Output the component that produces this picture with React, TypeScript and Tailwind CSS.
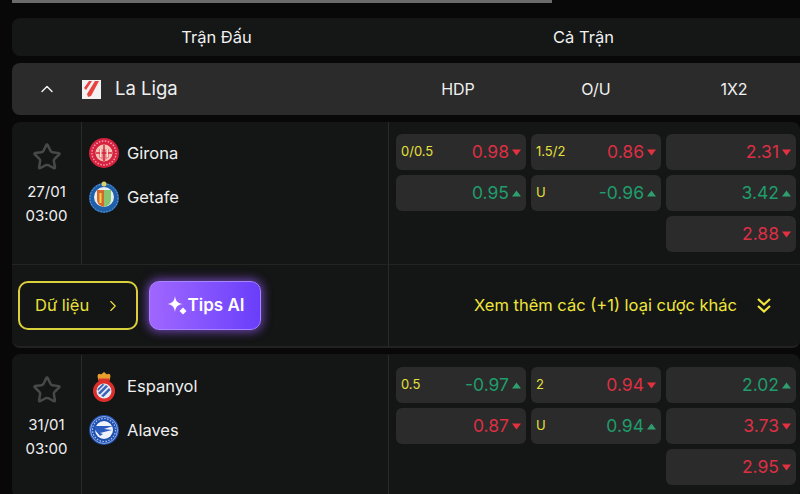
import { ChevronRight, ChevronUp, Star } from "lucide-react";

const font = { fontFamily: "Inter, 'Liberation Sans', sans-serif" };

const Triangle = ({ up }: { up: boolean }) => (
  <svg width="9" height="7" viewBox="0 0 9 7" className={up ? "fill-[#2f9e6e]" : "fill-[#e5303f]"}>
    {up ? <path d="M4.5 0.5 L9 6.5 H0 Z" /> : <path d="M0 0.5 H9 L4.5 6.5 Z" />}
  </svg>
);

const OddCell = ({ label, value, up }: { label?: string; value: string; up: boolean }) => (
  <div className="flex h-[36px] items-center justify-between rounded-md bg-[#2b2b2b] px-[5px]">
    <span className="text-[13px] text-[#e8e03c]">{label}</span>
    <span className="flex items-center gap-[3px]">
      <span className={`text-[17.5px] ${up ? "text-[#1f9d6b]" : "text-[#dc2f44]"}`}>{value}</span>
      <Triangle up={up} />
    </span>
  </div>
);

const Girona = () => (
  <svg width="30" height="30" viewBox="0 0 30 30">
    <circle cx="15" cy="15" r="15" fill="#d8213f" />
    <circle cx="15" cy="15" r="12" fill="none" stroke="#eea3ad" strokeWidth="1.4" strokeDasharray="1.5 1.5" />
    <circle cx="15" cy="15" r="8.5" fill="#f0c4b6" />
    <path d="M10 11h10v8l-5 4-5-4z" fill="#e8818a" />
    <path d="M15 7v16M7 15h16" stroke="#d8213f" strokeWidth="1.4" />
    <path d="M11 11h1.5v8H11zM17.5 11H19v8h-1.5z" fill="#f9e3c9" />
  </svg>
);

const Getafe = () => (
  <svg width="30" height="32" viewBox="0 0 30 32">
    <circle cx="15" cy="17" r="15" fill="#1f5fa8" />
    <circle cx="15" cy="17" r="14" fill="none" stroke="#9dbde0" strokeWidth="0.7" strokeDasharray="1.5 1.5" />
    <circle cx="15" cy="16" r="10" fill="#e6eef5" />
    <path d="M8 9h7v17c-4-1-7-3-7-8z" fill="#d9662b" />
    <path d="M15 9h7v9c0 5-3 7-7 8z" fill="#86c46f" />
    <rect x="10.5" y="12" width="2" height="10" fill="#f2d14a" />
    <circle cx="15" cy="3" r="2.5" fill="#d8d06a" />
  </svg>
);

const Espanyol = () => (
  <svg width="24" height="31" viewBox="0 0 24 31">
    <path d="M6 3.5a2 2 0 0 1 3 0L12 1l3 2.5a2 2 0 0 1 3 0c1 1.500 0 4-.5 6h-11C6 7.500 5 5 6 3.500z" fill="#e8a02c" />
    <rect x="6.500" y="7.500" width="11" height="2.500" fill="#d8322c" />
    <circle cx="12" cy="20" r="11" fill="#dc2f2c" />
    <circle cx="12" cy="20" r="7.500" fill="#e6ecf5" />
    <path d="M6 22l8-8 2 1.500-8 8zM9 25l8-8 1.500 2-7 7z" fill="#3a62b5" />
    <path d="M5.500 18l5-5 2 .5-6.500 6.500z" fill="#3a62b5" />
  </svg>
);

const Alaves = () => (
  <svg width="30" height="30" viewBox="0 0 30 30">
    <circle cx="15" cy="15" r="15" fill="#1f4fb0" />
    <circle cx="15" cy="15" r="13.500" fill="none" stroke="#a9c2ee" strokeWidth="0.8" />
    <circle cx="15" cy="15" r="11.500" fill="none" stroke="#a9c2ee" strokeWidth="1.200" strokeDasharray="1.500 1.500" />
    <circle cx="15" cy="15" r="9" fill="#eef3fb" />
    <path d="M6 11h18l-9 3 8 1-12 3 3 1-3 2-5-6z" fill="#2a5cc0" />
  </svg>
);

const LaLiga = () => (
  <svg width="19" height="19" viewBox="0 0 19 19">
    <rect width="19" height="19" fill="#f2f2f2" />
    <path d="M2 8 L7 1 H10 L4 10 Z M5 14 L13 1 H17 L9 16 L6 17 Z" fill="#e8433f" />
  </svg>
);

type Row = { label?: string; value: string; up: boolean };
type MatchProps = {
  date: string;
  home: { name: string; logo: React.ReactNode };
  away: { name: string; logo: React.ReactNode };
  hdp: Row[];
  ou: Row[];
  x12: Row[];
  footer?: boolean;
};

const Match = ({ date, home, away, hdp, ou, x12, footer }: MatchProps) => (
  <div className={`rounded-lg bg-[#141515] ${footer ? "mt-[7px] border-b-2 border-[#222]" : "mt-[6px] border-t border-[#141515]"}`}>
    <div className="flex h-[143px] border-b border-[#242424]">
      <div className="flex w-[70px] shrink-0 flex-col items-center border-r border-[#2a2a2a] pt-[20px] text-white">
        <Star size={30} strokeWidth={2} className="text-[#484848]" />
        <div className="mt-[8px] text-[15px] leading-[23.5px] text-[#f0f0f0]">{date}</div>
        <div className="text-[15px] leading-[23.5px] text-[#f0f0f0]">03:00</div>
      </div>
      <div className="w-[307px] shrink-0 border-r border-[#2a2a2a] pl-[7px] pt-[16px] text-[16.5px] text-[#efefef]">
        <div className="flex h-[30px] items-center gap-[8px]">
          <div className="flex w-[30px] justify-center">{home.logo}</div>
          {home.name}
        </div>
        <div className="mt-[14px] flex h-[30px] items-center gap-[8px]">
          <div className="flex w-[30px] justify-center">{away.logo}</div>
          {away.name}
        </div>
      </div>
      <div className="grid flex-1 grid-cols-[130px_130px_130px] gap-x-[5px] pl-[7px] pt-[12px]">
        {[hdp, ou, x12].map((col, i) => (
          <div key={i} className="flex flex-col gap-[5px]">
            {col.map((c, j) => (
              <OddCell key={j} {...c} />
            ))}
          </div>
        ))}
      </div>
    </div>
    {footer && (
      <div className="flex h-[81px]">
        <div className="flex w-[377px] shrink-0 items-center gap-[11px] border-r border-[#2a2a2a] pl-[6px]">
          <button className="flex h-[49px] w-[120px] items-center justify-between rounded-[10px] border-2 border-[#d8d13c] pl-[15px] pr-[14px] text-[16.5px] text-[#e8e03c]">
            Dữ liệu
            <ChevronRight size={18} strokeWidth={1.5} />
          </button>
          <button className="flex h-[49px] w-[112px] items-center justify-center rounded-[10px] border border-[#a884ff] bg-gradient-to-r from-[#a066ff] to-[#6a3dfa] text-[17px] font-semibold text-white shadow-[0_0_10px_2px_rgba(150,90,255,0.65)]">
            <svg width="22" height="21" viewBox="0 0 22 21" fill="white">
              <path d="M9 1 C9.800 6.500 11.500 8.200 17 9 C11.500 9.800 9.800 11.500 9 17 C8.200 11.500 6.500 9.800 1 9 C6.500 8.200 8.200 6.500 9 1 Z" />
              <path d="M17 12.500 L20.500 16 L17 19.500 L13.500 16 Z" />
            </svg>
            Tips AI
          </button>
        </div>
        <div className="flex flex-1 items-center pl-[85px] text-[16.5px] text-[#f0e63c]">
          Xem thêm các (+1) loại cược khác
          <svg width="16" height="17" viewBox="0 0 16 17" fill="none" stroke="currentColor" strokeWidth="2.2" className="ml-[19px] shrink-0">
            <path d="M2 2 L8 7.500 L14 2 M2 9 L8 14.500 L14 9" />
          </svg>
        </div>
      </div>
    )}
  </div>
);

export default function App() {
  return (
    <div style={font} className="h-[494px] w-[800px] overflow-hidden bg-[#080808]">
      <div className="ml-[12px] h-[3px] w-[540px] bg-[#6b6b6b]" />
      <div className="ml-[12px] mt-[15px] flex h-[38px] items-center rounded-l-lg bg-[#151616] text-[16.5px] text-[#f0f0f0]">
        <div className="w-[409px] text-center">Trận Đấu</div>
        <div className="w-[325px] text-center">Cả Trận</div>
      </div>
      <div className="ml-[12px] mt-[7px] flex h-[52px] items-center rounded-l-lg bg-[#2b2b2b] text-[#f0f0f0]">
        <ChevronUp size={20} strokeWidth={1.75} className="ml-[25px] shrink-0" />
        <div className="ml-[25px] shrink-0">
          <LaLiga />
        </div>
        <span className="ml-[14px] w-[274px] shrink-0 text-[18.5px]">La Liga</span>
        <div className="grid grid-cols-[138px_138px_138px] text-center text-[16px]">
          <span>HDP</span>
          <span>O/U</span>
          <span>1X2</span>
        </div>
      </div>
      <div className="ml-[12px]">
        <Match
          date="27/01"
          home={{ name: "Girona", logo: <Girona /> }}
          away={{ name: "Getafe", logo: <Getafe /> }}
          hdp={[{ label: "0/0.5", value: "0.98", up: false }, { value: "0.95", up: true }]}
          ou={[{ label: "1.5/2", value: "0.86", up: false }, { label: "U", value: "-0.96", up: true }]}
          x12={[{ value: "2.31", up: false }, { value: "3.42", up: true }, { value: "2.88", up: false }]}
          footer
        />
        <Match
          date="31/01"
          home={{ name: "Espanyol", logo: <Espanyol /> }}
          away={{ name: "Alaves", logo: <Alaves /> }}
          hdp={[{ label: "0.5", value: "-0.97", up: true }, { value: "0.87", up: false }]}
          ou={[{ label: "2", value: "0.94", up: false }, { label: "U", value: "0.94", up: true }]}
          x12={[{ value: "2.02", up: true }, { value: "3.73", up: false }, { value: "2.95", up: false }]}
        />
      </div>
    </div>
  );
}
